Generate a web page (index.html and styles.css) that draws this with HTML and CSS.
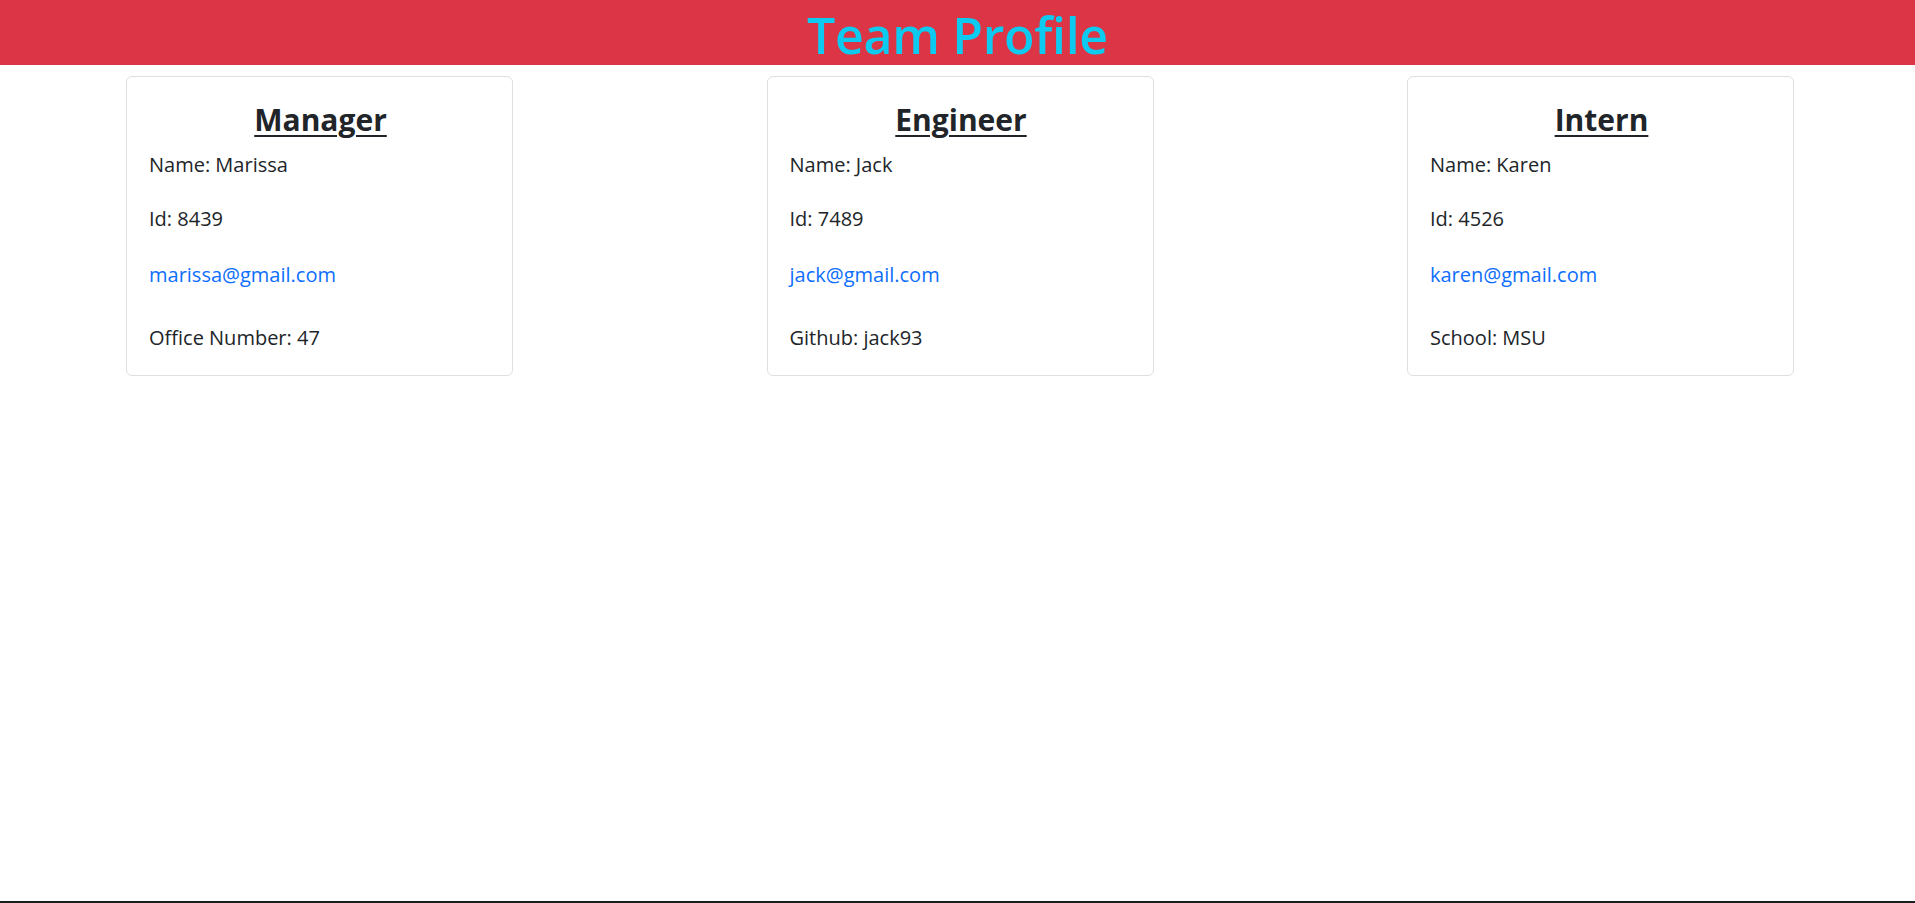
FILE: index.html
```html
<!DOCTYPE html>
<html lang="en">
<head>
<meta charset="utf-8">
<title>Team Profile</title>
<link rel="stylesheet" href="styles.css">
</head>
<body>
<header class="banner">
  <h1 class="banner-title">Team Profile</h1>
</header>
<main class="team">
  <section class="card">
    <h3 class="card-title">Manager</h3>
    <p class="card-line">Name: Marissa</p>
    <p class="card-line card-id">Id: 8439</p>
    <p class="card-line"><a class="card-link" href="mailto:marissa@gmail.com">marissa@gmail.com</a></p>
    <p class="card-line card-extra">Office Number: 47</p>
  </section>
  <section class="card">
    <h3 class="card-title">Engineer</h3>
    <p class="card-line">Name: Jack</p>
    <p class="card-line card-id">Id: 7489</p>
    <p class="card-line"><a class="card-link" href="mailto:jack@gmail.com">jack@gmail.com</a></p>
    <p class="card-line card-extra">Github: jack93</p>
  </section>
  <section class="card">
    <h3 class="card-title">Intern</h3>
    <p class="card-line">Name: Karen</p>
    <p class="card-line card-id">Id: 4526</p>
    <p class="card-line"><a class="card-link" href="mailto:karen@gmail.com">karen@gmail.com</a></p>
    <p class="card-line card-extra">School: MSU</p>
  </section>
</main>
<footer class="edge"></footer>
</body>
</html>
```

FILE: styles.css
```css
* {
  box-sizing: border-box;
}

html, body {
  margin: 0;
  padding: 0;
}

body {
  min-height: 100vh;
  display: flex;
  flex-direction: column;
  background: #ffffff;
  color: #212529;
  font-family: "Open Sans", "Noto Sans", "Liberation Sans", sans-serif;
  font-size: 20px;
}

.banner {
  height: 65px;
  background: #dc3545;
  padding-top: 5px;
}

.banner-title {
  margin: 0;
  text-align: center;
  font-size: 50px;
  line-height: 60px;
  font-weight: 600;
  color: #0dcaf0;
  letter-spacing: -0.3px;
}

.team {
  display: flex;
  justify-content: space-between;
  align-items: flex-start;
  padding: 11px 121px 0 126px;
}

.card {
  width: 387px;
  height: 300px;
  border: 1px solid #dfdfdf;
  border-radius: 6px;
  padding: 25px 20px 0 22px;
  background: #ffffff;
}

.card-title {
  margin: 0 0 12px 0;
  text-align: center;
  font-size: 30px;
  line-height: 36px;
  font-weight: 700;
  text-decoration: underline;
  text-decoration-thickness: 2px;
  text-underline-offset: 4px;
}

.card-line {
  margin: 0 0 23.5px 0;
  font-size: 20px;
  line-height: 30px;
}

.card-id {
  margin-bottom: 26px;
}

.card-link {
  color: #0d6efd;
  text-decoration: none;
}

.card-extra {
  margin-top: 33.8px;
  margin-bottom: 0;
}

.edge {
  margin-top: auto;
  height: 2px;
  background: #1f1f1f;
}
```
